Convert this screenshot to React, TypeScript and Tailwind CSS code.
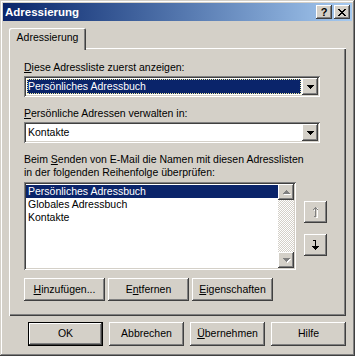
import { ReactNode } from "react";

const raised =
  "shadow-[inset_-1px_-1px_#404040,inset_1px_1px_#fff,inset_-2px_-2px_#808080,inset_2px_2px_#d4d0c8]";
const sunken =
  "shadow-[inset_1px_1px_#808080,inset_-1px_-1px_#fff,inset_2px_2px_#404040,inset_-2px_-2px_#d4d0c8]";

const DownTriangle = ({ color = "#000" }: { color?: string }) => (
  <svg width="7" height="4" viewBox="0 0 7 4" shapeRendering="crispEdges">
    <path d="M0 0h7v1H0zM1 1h5v1H1zM2 2h3v1H2zM3 3h1v1H3z" fill={color} />
  </svg>
);

const UpTriangle = ({ color = "#000" }: { color?: string }) => (
  <svg width="7" height="4" viewBox="0 0 7 4" shapeRendering="crispEdges">
    <path d="M3 0h1v1H3zM2 1h3v1H2zM1 2h5v1H1zM0 3h7v1H0z" fill={color} />
  </svg>
);

const Button = ({
  children,
  className = "",
  isDefault = false,
}: {
  children: ReactNode;
  className?: string;
  isDefault?: boolean;
}) => (
  <div
    className={
      isDefault
        ? `flex items-center justify-center border border-black bg-[#d4d0c8] ${className}`
        : `flex items-center justify-center bg-[#d4d0c8] ${raised} ${className}`
    }
  >
    {isDefault ? (
      <div
        className={`flex h-full w-full items-center justify-center shadow-[inset_-1px_-1px_#404040,inset_1px_1px_#fff,inset_-2px_-2px_#808080] pb-px`}
      >
        {children}
      </div>
    ) : (
      <span className="pb-px">{children}</span>
    )}
  </div>
);

const Combo = ({ value, focused }: { value: string; focused?: boolean }) => (
  <div className={`flex h-[21px] w-[296px] items-stretch bg-white p-[2px] ${sunken}`}>
    <div className="flex flex-1 items-center pl-px pr-[1px] py-[1px]">
      {focused ? (
        <div className="flex h-full flex-1 items-center bg-[#0a246a] pl-[1px] text-white outline-1 outline-dotted outline-[#f0eca0] -outline-offset-1">
          {value}
        </div>
      ) : (
        <div className="flex h-full flex-1 items-center pl-[1px]">{value}</div>
      )}
    </div>
    <div className={`flex w-[16px] items-center justify-center bg-[#d4d0c8] ${raised}`}>
      <DownTriangle />
    </div>
  </div>
);

export default function App() {
  return (
    <div className="font-['Liberation_Sans',Arial,sans-serif] text-[10.5px] leading-[13px] text-black">
      <div className="flex h-[356px] w-[355px] flex-col bg-[#d4d0c8] p-[3px] shadow-[inset_-1px_-1px_#404040,inset_1px_1px_#d4d0c8,inset_-2px_-2px_#808080,inset_2px_2px_#fff]">
        {/* title bar */}
        <div className="flex h-[18px] items-center bg-linear-to-r from-[#0a246a] to-[#a6caf0] pl-[2px] pr-[2px]">
          <span className="flex-1 text-[11.5px] font-bold text-white">Adressierung</span>
          <div className={`flex h-[14px] w-[16px] items-center justify-center bg-[#d4d0c8] ${raised}`}>
            <span className="text-[11px] font-bold leading-none">?</span>
          </div>
          <div className={`ml-[2px] flex h-[14px] w-[16px] items-center justify-center bg-[#d4d0c8] ${raised}`}>
            <svg width="8" height="7" viewBox="0 0 8 7" shapeRendering="crispEdges">
              <path
                d="M0 0h2v1H0zM6 0h2v1H6zM1 1h2v1H1zM5 1h2v1H5zM2 2h4v1H2zM3 3h2v1H3zM2 4h4v1H2zM1 5h2v1H1zM5 5h2v1H5zM0 6h2v1H0zM6 6h2v1H6z"
                fill="#000"
              />
            </svg>
          </div>
        </div>

        {/* body */}
        <div className="flex flex-1 flex-col px-[6px] pt-[7px]">
          <div className="relative z-10 -mb-[2px] flex h-[22px] w-[77px] items-center justify-center rounded-t-[2px] bg-[#d4d0c8] pb-[3px] shadow-[inset_1px_1px_#fff,inset_-1px_0_#404040,inset_-2px_0_#808080]">
            Adressierung
          </div>
          <div className="flex h-[268px] flex-col pl-[15px] pt-[13px] shadow-[inset_1px_1px_#fff,inset_-1px_-1px_#404040,inset_-2px_-2px_#808080]">
            <div>
              <u>D</u>iese Adressliste zuerst anzeigen:
            </div>
            <div className="mt-[2px]">
              <Combo value="Persönliches Adressbuch" focused />
            </div>

            <div className="mt-[10px]">
              <u>P</u>ersönliche Adressen verwalten in:
            </div>
            <div className="mt-[2px]">
              <Combo value="Kontakte" />
            </div>

            <div className="mt-[10px]">
              Beim <u>S</u>enden von E-Mail die Namen mit diesen Adresslisten
              <br />
              in der folgenden Reihenfolge überprüfen:
            </div>

            <div className="mt-[3px] flex items-start">
              <div className={`flex h-[88px] w-[272px] bg-white p-[2px] ${sunken}`}>
                <div className="flex flex-1 flex-col pt-px">
                  <div className="bg-[#0a246a] pl-[2px] text-white">Persönliches Adressbuch</div>
                  <div className="pl-[2px]">Globales Adressbuch</div>
                  <div className="pl-[2px]">Kontakte</div>
                </div>
                <div className="flex w-[16px] flex-col bg-[repeating-conic-gradient(#d4d0c8_0_25%,#fff_0_50%)] bg-[length:2px_2px]">
                  <div className={`flex h-[16px] items-center justify-center bg-[#d4d0c8] ${raised}`}>
                    <div className="relative">
                      <div className="absolute left-px top-px">
                        <UpTriangle color="#fff" />
                      </div>
                      <div className="relative flex">
                        <UpTriangle color="#808080" />
                      </div>
                    </div>
                  </div>
                  <div className="flex-1" />
                  <div className={`flex h-[16px] items-center justify-center bg-[#d4d0c8] ${raised}`}>
                    <div className="relative">
                      <div className="absolute left-px top-px">
                        <DownTriangle color="#fff" />
                      </div>
                      <div className="relative flex">
                        <DownTriangle color="#808080" />
                      </div>
                    </div>
                  </div>
                </div>
              </div>

              <div className="ml-[8px] mt-[19px] flex flex-col gap-[11px]">
                <div className={`flex h-[22px] w-[23px] items-center justify-center bg-[#d4d0c8] ${raised}`}>
                  <svg width="8" height="11" viewBox="0 0 8 11" shapeRendering="crispEdges">
                    <path d="M5 1h1v10H5zM4 10h2v1H4zM2 3h1v1H2zM3 2h1v1H3z" fill="#fff" />
                    <path d="M3 1h1v9H3zM2 9h2v1H2zM1 2h1v1H1zM2 1h1v1H2zM4 1h1v1H4zM5 2h1v1H5zM3 0h1v1H3z" fill="#808080" />
                  </svg>
                </div>
                <div className={`flex h-[22px] w-[23px] items-center justify-center bg-[#d4d0c8] ${raised}`}>
                  <svg width="7" height="11" viewBox="0 0 7 11" shapeRendering="crispEdges">
                    <path d="M1 0h3v1H1zM3 1h1v7H3zM0 6h7v1H0zM1 7h5v1H1zM2 8h3v1H2zM3 9h1v1H3z" fill="#000" />
                  </svg>
                </div>
              </div>
            </div>

            <div className="mt-[8px] flex gap-[3px]">
              <Button className="h-[23px] w-[81px]">
                <u>H</u>inzufügen...
              </Button>
              <Button className="h-[23px] w-[81px]">
                E<u>n</u>tfernen
              </Button>
              <Button className="h-[23px] w-[81px]">
                <u>E</u>igenschaften
              </Button>
            </div>
          </div>

          <div className="mt-[6px] flex justify-end gap-[6px]">
            <Button className="h-[24px] w-[75px]" isDefault>
              OK
            </Button>
            <Button className="h-[24px] w-[75px]">Abbrechen</Button>
            <Button className="h-[24px] w-[75px]">
              <u>Ü</u>bernehmen
            </Button>
            <Button className="h-[24px] w-[75px]">Hilfe</Button>
          </div>
        </div>
      </div>
    </div>
  );
}
